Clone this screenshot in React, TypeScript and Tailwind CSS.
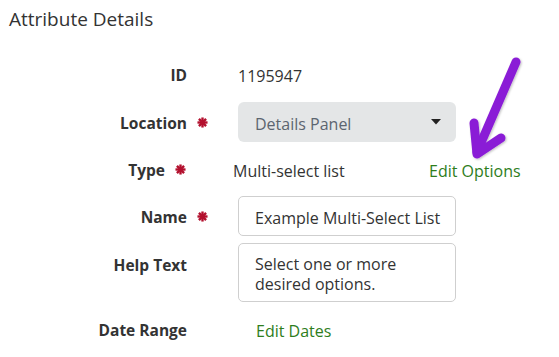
import React from "react";

const Star = () => (
  <svg width="11" height="11" viewBox="0 0 12 12" className="block">
    <g stroke="#b3102e" strokeWidth="2.6" strokeLinecap="butt">
      <line x1="6" y1="0.5" x2="6" y2="11.5" />
      <line x1="0.5" y1="6" x2="11.5" y2="6" />
      <line x1="2.1" y1="2.1" x2="9.9" y2="9.9" />
      <line x1="9.9" y1="2.1" x2="2.1" y2="9.9" />
    </g>
  </svg>
);

const Label = ({ children, w }: { children: React.ReactNode; w: string }) => (
  <div className={`${w} shrink-0 text-right font-bold text-[15.5px] text-[#333]`}>{children}</div>
);

export default function App() {
  return (
    <div
      className="relative w-[559px] h-[357px] bg-white overflow-hidden text-[#333]"
      style={{ fontFamily: "'Open Sans', 'Noto Sans', sans-serif" }}
    >
      <div className="pl-[9px] pt-[7px] text-[19px] leading-[24px] text-[#333]">Attribute Details</div>

      <div className="flex flex-col">
        {/* ID */}
        <div className="mt-[31px] flex items-center h-[24px]">
          <Label w="w-[187px] pt-[4px]">ID</Label>
          <div className="w-[51px] shrink-0" />
          <div className="text-[16px] pt-[4px]">1195947</div>
        </div>

        {/* Location */}
        <div className="mt-[16px] flex items-center h-[40px]">
          <Label w="w-[187px] pt-[4px]">Location</Label>
          <div className="w-[51px] shrink-0 pl-[10px] pt-[1px]">
            <Star />
          </div>
          <div className="w-[218px] h-[40px] rounded-[6px] bg-[#e4e6e7] flex items-center justify-between pl-[17px] pr-[15px]">
            <span className="text-[16px] text-[#5c6570] pt-[3px]">Details Panel</span>
            <svg width="10" height="6" viewBox="0 0 10 6">
              <path d="M0 0 L10 0 L5 5.5 Z" fill="#222" />
            </svg>
          </div>
        </div>

        {/* Type */}
        <div className="mt-[15px] flex items-center h-[24px]">
          <Label w="w-[165px] pt-[4px]">Type</Label>
          <div className="w-[68px] shrink-0 pl-[10px] pt-[1px]">
            <Star />
          </div>
          <div className="w-[196px] shrink-0 text-[16px] pt-[4px]">Multi-select list</div>
          <div className="text-[16px] text-[#2e7d1c] pt-[4px]">Edit Options</div>
        </div>

        {/* Name */}
        <div className="mt-[15px] flex items-center h-[40px]">
          <Label w="w-[187px] pt-[4px]">Name</Label>
          <div className="w-[51px] shrink-0 pl-[10px] pt-[1px]">
            <Star />
          </div>
          <div className="w-[218px] h-[40px] rounded-[5px] border border-[#cfcfcf] flex items-center pl-[16px] pt-[3px] overflow-hidden whitespace-nowrap text-[16px]">
            Example Multi-Select List
          </div>
        </div>

        {/* Help Text */}
        <div className="mt-[7px] flex items-start">
          <Label w="w-[187px] pt-[11px]">Help Text</Label>
          <div className="w-[51px] shrink-0" />
          <div className="w-[218px] h-[59px] rounded-[5px] border border-[#cfcfcf] pl-[16px] pt-[10px] text-[16px] leading-[20px]">
            Select one or more
            <br />
            desired options.
          </div>
        </div>

        {/* Date Range */}
        <div className="mt-[15px] flex items-center h-[24px]">
          <Label w="w-[187px] pt-[4px]">Date Range</Label>
          <div className="w-[69px] shrink-0" />
          <div className="text-[16px] text-[#2e7d1c] pt-[4px]">Edit Dates</div>
        </div>
      </div>

      {/* annotation arrow */}
      <svg className="absolute left-0 top-0 pointer-events-none" width="559" height="357">
        <defs>
          <filter id="sh" x="-20%" y="-20%" width="140%" height="140%">
            <feDropShadow dx="1" dy="1" stdDeviation="1" floodColor="#000" floodOpacity="0.25" />
          </filter>
        </defs>
        <g
          stroke="#8a1ed6"
          strokeWidth="9"
          strokeLinecap="round"
          strokeLinejoin="round"
          fill="none"
          filter="url(#sh)"
        >
          <path d="M516 62 L477 152" />
          <path d="M474 123 L477 154 L501 138" />
        </g>
      </svg>
    </div>
  );
}
